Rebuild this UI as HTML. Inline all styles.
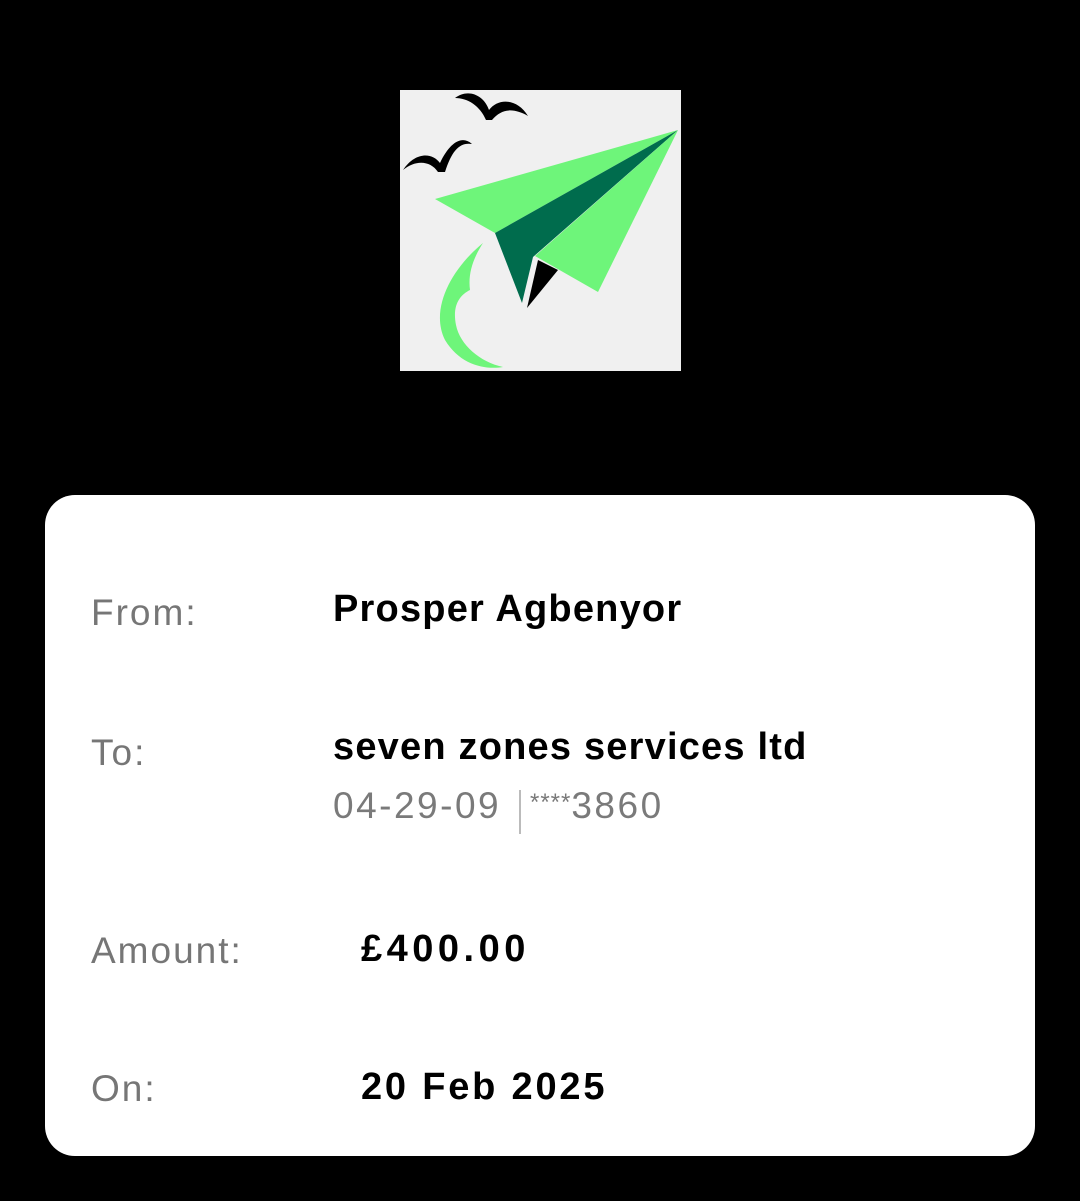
<!DOCTYPE html>
<html><head><style>
body{margin:0;background:#000;width:1080px;height:1201px;position:relative;overflow:hidden;font-family:"Liberation Sans",sans-serif}
.card{position:absolute;left:45px;top:495px;width:990px;height:661px;background:#fff;border-radius:30px}
.t{position:absolute;white-space:nowrap;line-height:1}
.l{color:#767676;font-size:37px;left:91px;letter-spacing:2px}
.v{color:#000;font-weight:bold;font-size:38px;letter-spacing:1.2px}
.s{color:#7a7a7a;font-size:37px;letter-spacing:2.5px}
</style></head><body>
<svg style="position:absolute;left:400px;top:90px" width="281" height="281" viewBox="0 0 281 281">
<rect width="281" height="281" fill="#f0f0f0"/>
<polygon points="35,109 278,40 95,143" fill="#6ef57a"/>
<polygon points="95,143 278,40 133,167 122,213" fill="#006c4d"/>
<polygon points="278,40 135,166 198,202" fill="#6ef57a"/>
<polygon points="138,170 158,180 127,218" fill="#000"/>
<path d="M83,153 C50,180 30,220 45,250 C60,275 85,280 103,277 C80,272 60,255 56,235 C52,215 60,205 70,200 C68,185 72,170 83,153Z" fill="#6ef57a"/>
<path d="M55,8 C68,-2 84,5 89,20 C98,8 117,8 128,26 C114,18 102,18 92,30 L86,30 C80,16 68,8 55,8Z" fill="#000"/>
<path d="M3,80 C15,62 32,62 40,73 C50,52 62,45 72,54 C60,52 52,60 45,82 L38,82 C30,70 15,70 3,80Z" fill="#000"/>
</svg>
<div class="card"></div>
<div class="t l" style="top:594px">From:</div>
<div class="t v" style="left:333px;top:590px">Prosper Agbenyor</div>
<div class="t l" style="top:734px">To:</div>
<div class="t v" style="left:333px;top:728px">seven zones services ltd</div>
<div class="t s" style="left:333px;top:787px">04-29-09</div>
<div style="position:absolute;left:519px;top:790px;width:2px;height:44px;background:#bbb"></div>
<div class="t s" style="left:530px;top:787px"><span style="font-size:24px;vertical-align:8px;letter-spacing:1px">****</span>3860</div>
<div class="t l" style="top:932px">Amount:</div>
<div class="t v" style="left:361px;top:930px;letter-spacing:4.5px">£400.00</div>
<div class="t l" style="top:1070px">On:</div>
<div class="t v" style="left:361px;top:1068px;letter-spacing:2.8px">20 Feb 2025</div>
</body></html>
